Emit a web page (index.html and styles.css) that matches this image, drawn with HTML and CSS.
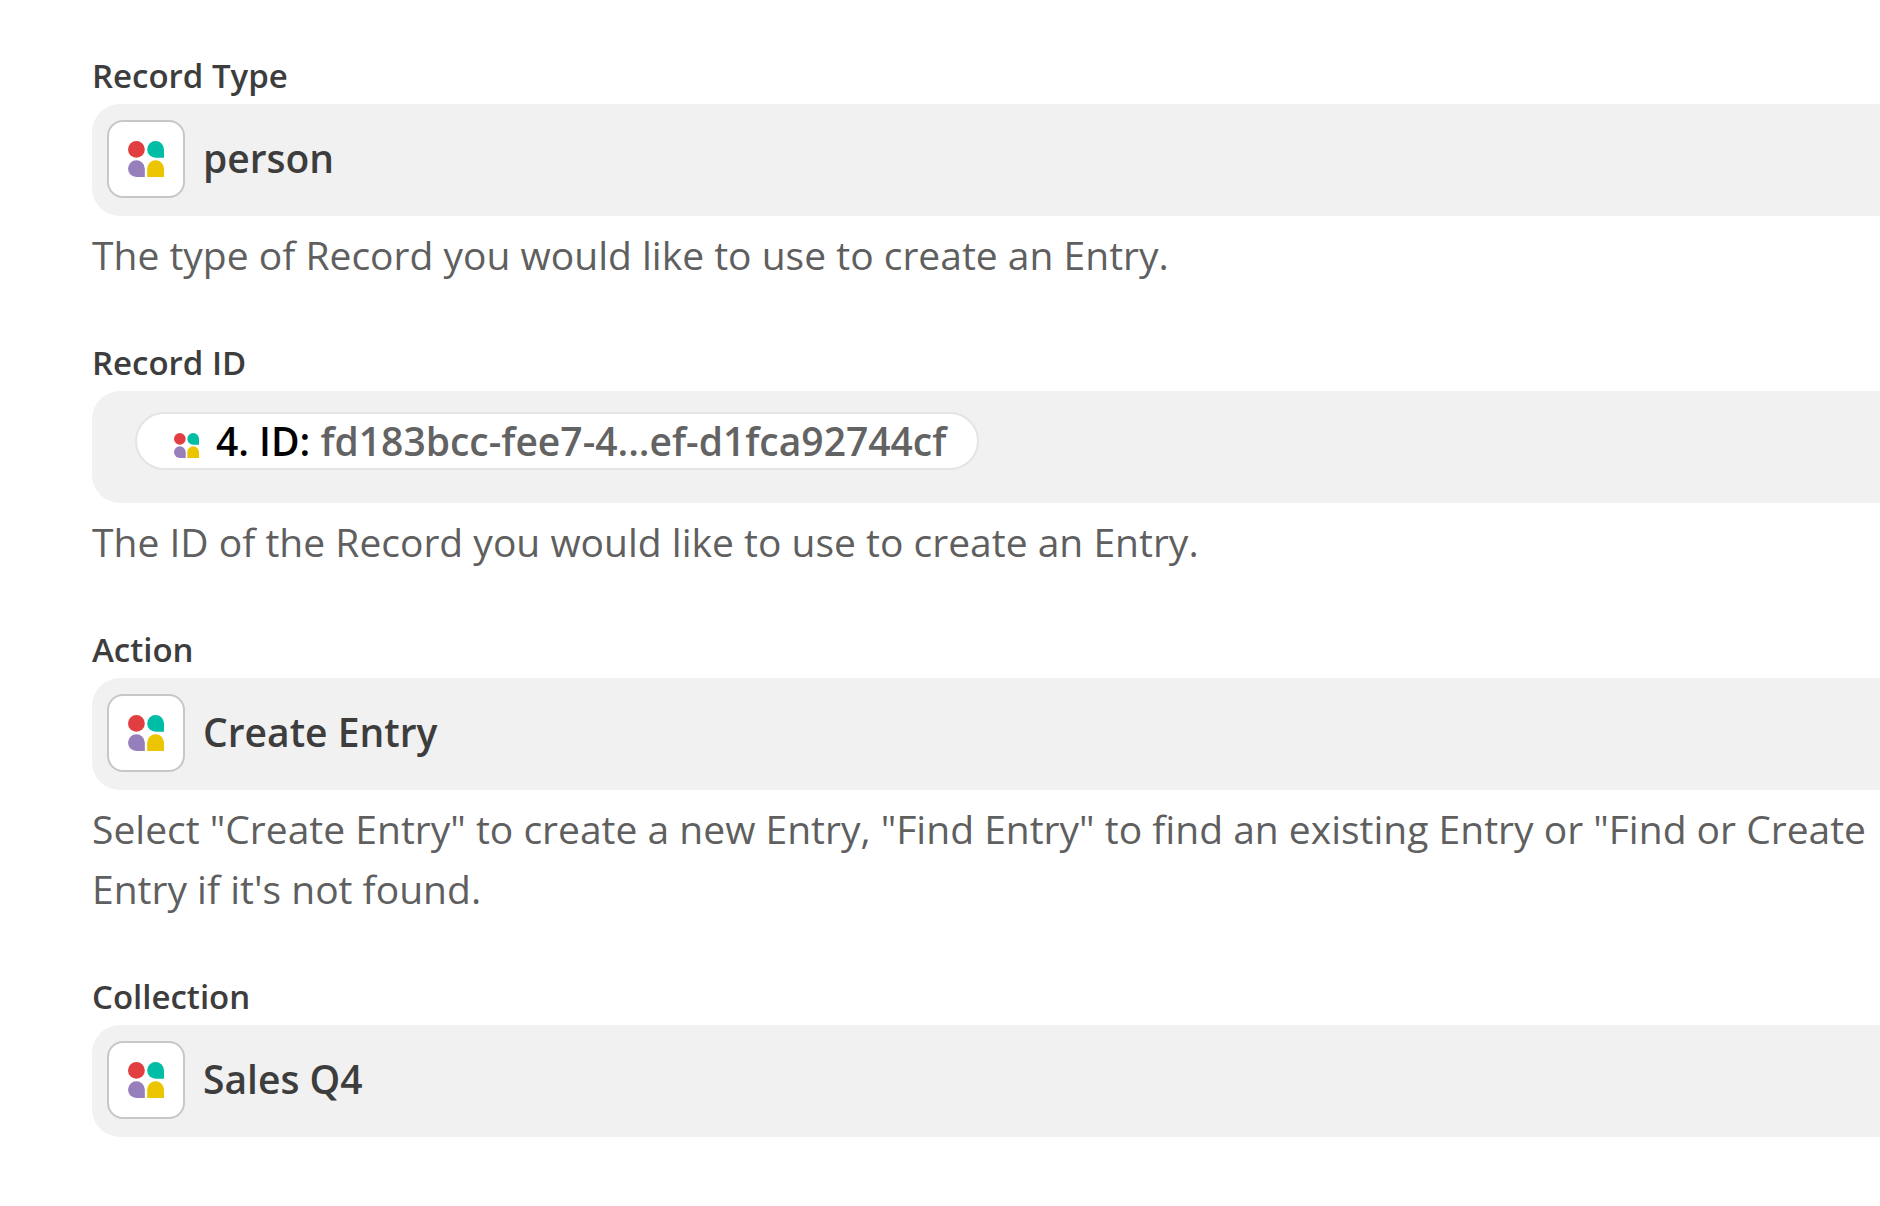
FILE: index.html
```html
<!DOCTYPE html>
<html lang="en">
<head>
  <meta charset="UTF-8" />
  <meta name="viewport" content="width=device-width, initial-scale=1.0"/>
  <title>Create Entry</title>
  <link rel="stylesheet" href="styles.css">
</head>
<body>
  <!-- app logo, reused in every field -->
  <svg class="sprite" aria-hidden="true">
    <symbol id="logo" viewBox="0 0 36 36">
      <circle cx="8.4" cy="8.4" r="8.4" fill="#e03e40"/>
      <path d="M27.6 0A8.4 8.4 0 0 1 36 8.4V16.8H27.6A8.4 8.4 0 0 1 27.6 0Z" fill="#00bda5"/>
      <path d="M8.4 19.2A8.4 8.4 0 0 1 16.8 27.6V36H8.4A8.4 8.4 0 0 1 8.4 19.2Z" fill="#967fba"/>
      <path d="M27.6 19.2A8.4 8.4 0 0 1 36 27.6V36H19.2V27.6A8.4 8.4 0 0 1 27.6 19.2Z" fill="#edc400"/>
    </symbol>
  </svg>

  <form class="fields">
    <div class="field">
      <label class="label" id="type-label" for="type">Record Type</label>
      <button class="box" id="type" type="button" aria-labelledby="type-label type-value">
        <span class="tile"><svg class="logo"><use href="#logo"/></svg></span>
        <span class="value" id="type-value">person</span>
      </button>
      <p class="help">The type of Record you would like to use to create an Entry.</p>
    </div>

    <div class="field">
      <label class="label" id="record-label" for="record">Record ID</label>
      <button class="box box-chip" id="record" type="button" aria-labelledby="record-label record-value">
        <span class="chip" id="record-value">
          <svg class="logo logo-small"><use href="#logo"/></svg>
          <span class="chip-text"><span class="chip-name">4. ID:</span> fd183bcc-fee7-4...ef-d1fca92744cf</span>
        </span>
      </button>
      <p class="help">The ID of the Record you would like to use to create an Entry.</p>
    </div>

    <div class="field">
      <label class="label" id="action-label" for="action">Action</label>
      <button class="box" id="action" type="button" aria-labelledby="action-label action-value">
        <span class="tile"><svg class="logo"><use href="#logo"/></svg></span>
        <span class="value" id="action-value">Create Entry</span>
      </button>
      <p class="help">Select "Create Entry" to create a new Entry, "Find Entry" to find an existing Entry or "Find or Create Entry if it's not found.</p>
    </div>

    <div class="field">
      <label class="label" id="collection-label" for="collection">Collection</label>
      <button class="box" id="collection" type="button" aria-labelledby="collection-label collection-value">
        <span class="tile"><svg class="logo"><use href="#logo"/></svg></span>
        <span class="value" id="collection-value">Sales Q4</span>
      </button>
    </div>
  </form>
</body>
</html>
```
FILE: styles.css
```css
* {
  box-sizing: border-box;
}

body {
  margin: 0;
  font-family: "Open Sans", sans-serif;
  background: #fff;
  color: #3d3d3d;
}

.sprite {
  display: none;
}

.fields {
  display: flex;
  flex-direction: column;
  gap: 58px;
  padding: 56px 0 56px 92px;
}

.field {
  display: flex;
  flex-direction: column;
}

.label {
  align-self: flex-start;
  margin-bottom: 8px;
  font-size: 33px;
  line-height: 40px;
  font-weight: 600;
}

.box {
  display: flex;
  align-items: center;
  gap: 18px;
  width: 100%;
  min-height: 112px;
  padding: 16px 15px 18px;
  border: none;
  border-radius: 28px 0 0 28px;
  background: #f1f1f1;
  color: inherit;
  font: inherit;
  text-align: left;
  cursor: pointer;
}

.tile {
  display: flex;
  align-items: center;
  justify-content: center;
  flex: none;
  width: 78px;
  height: 78px;
  border: 2px solid #c7c7c7;
  border-radius: 16px;
  background: #fff;
}

.logo {
  flex: none;
  width: 36px;
  height: 36px;
}

.value {
  padding-bottom: 2px;
  font-size: 39px;
  line-height: 60px;
  font-weight: 600;
}

.box-chip {
  align-items: flex-start;
  padding: 21px 43px;
}

.chip {
  display: flex;
  align-items: center;
  gap: 17px;
  padding: 0 31px 0 37px;
  border: 2px solid #e4e4e4;
  border-radius: 29px;
  background: #fff;
  color: #636363;
  font-size: 39px;
  line-height: 54px;
  font-weight: 600;
}

.logo-small {
  width: 25px;
  height: 25px;
  margin-top: 8px;
}

.chip-name {
  color: #000;
}

.help {
  margin: 9px 0 0;
  color: #5f5f5f;
  font-size: 39px;
  line-height: 60px;
}
```
